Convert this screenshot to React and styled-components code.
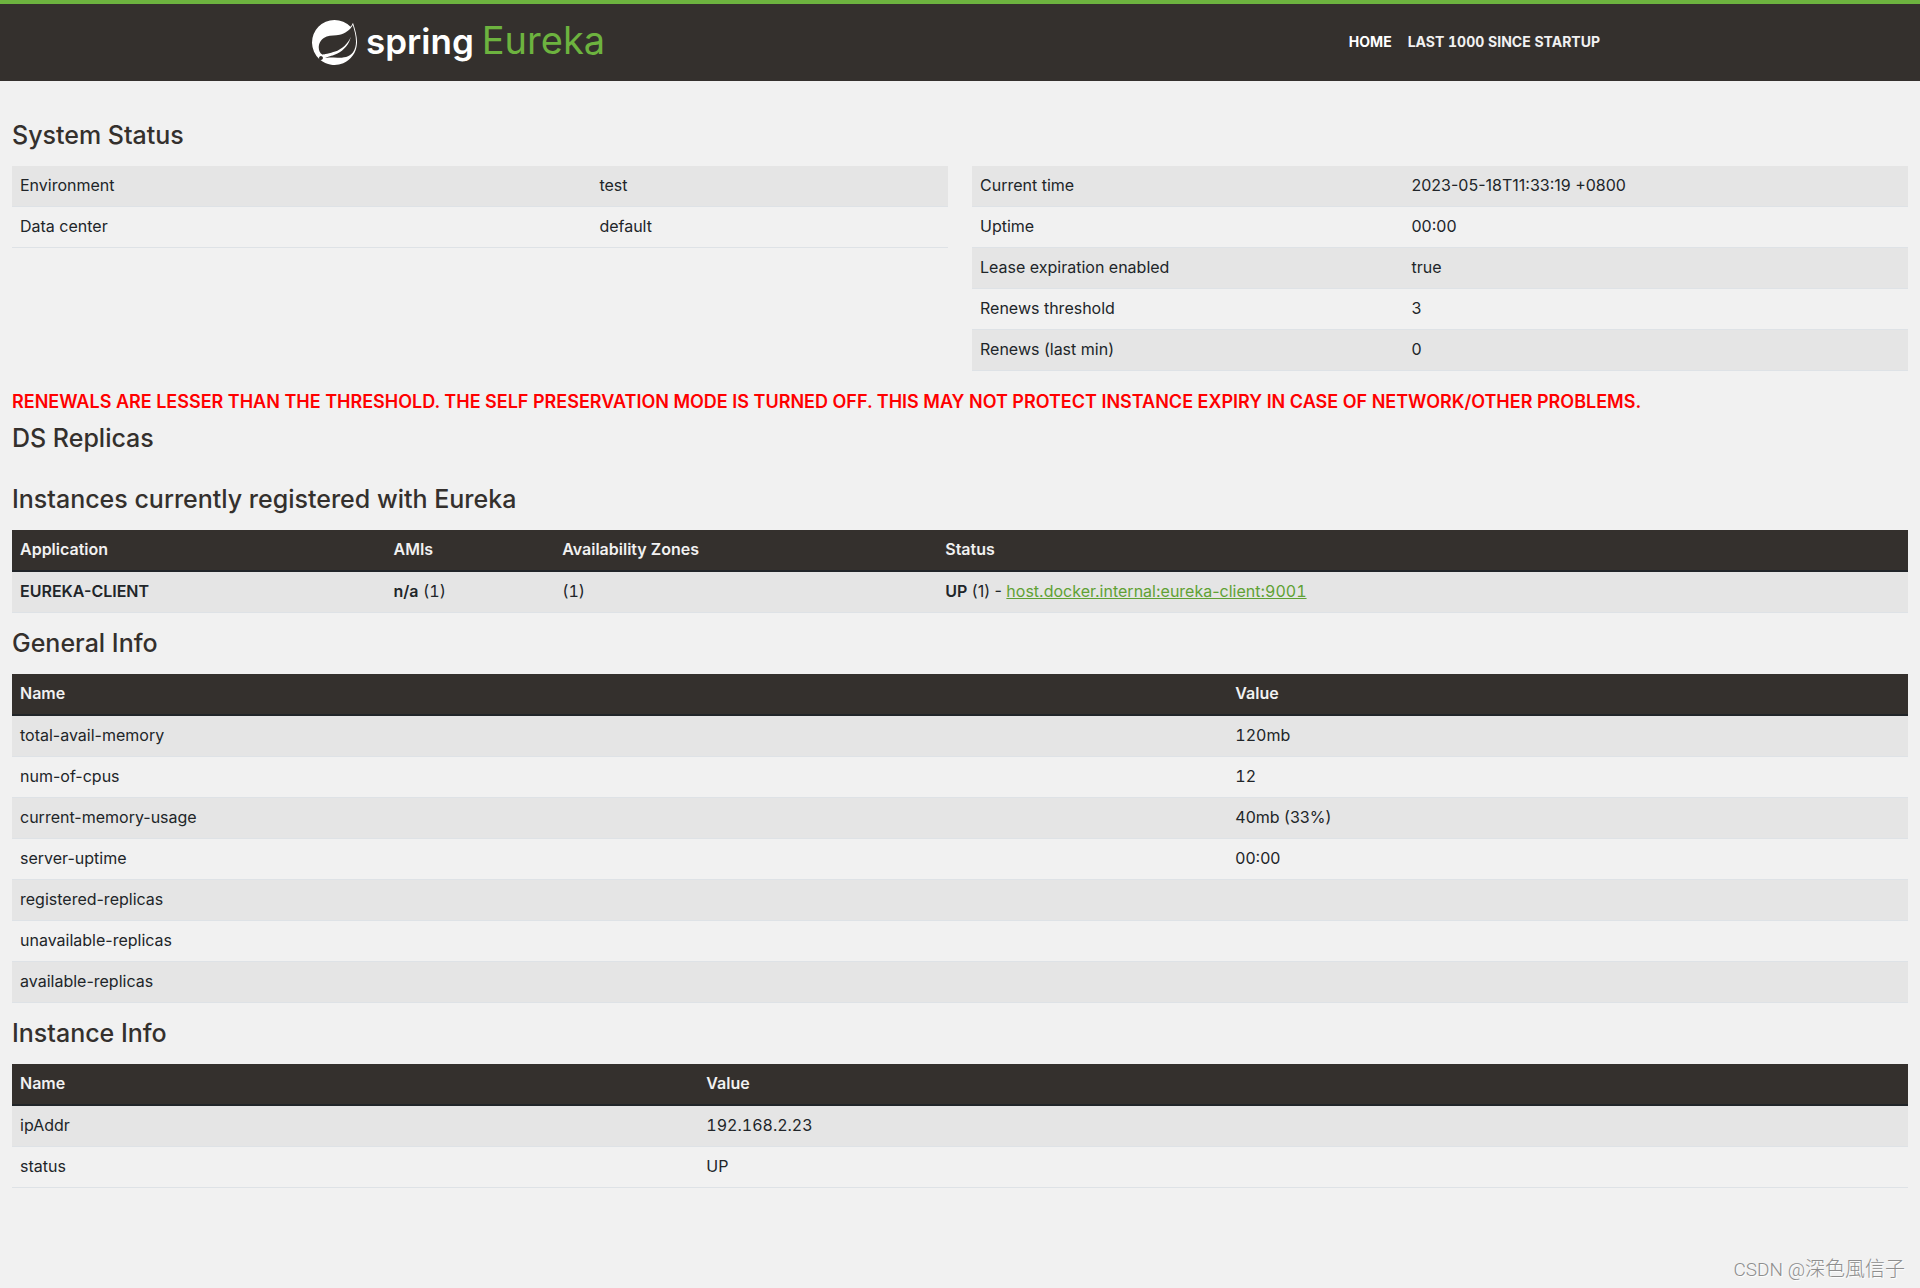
import React from "react";
import styled, { createGlobalStyle } from "styled-components";

const GlobalStyle = createGlobalStyle`
  * { box-sizing: border-box; }
  html { background: #f1f1f1; }
  body {
    margin: 0;
    background: #f1f1f1;
    color: #212529;
    font-family: Inter, "Liberation Sans", sans-serif;
    font-size: 16px;
    line-height: 24px;
  }
`;

const Page = styled.div`
  position: relative;
  min-height: 100vh;
`;

const NavBar = styled.header`
  background: #34302d;
  border-top: 4px solid #6db33f;
`;

const NavInner = styled.div`
  display: flex;
  align-items: center;
  justify-content: space-between;
  max-width: 1320px;
  height: 77px;
  margin: 0 auto;
  padding: 0 12px;
`;

const Brand = styled.a`
  display: flex;
  align-items: center;
  gap: 9px;
  text-decoration: none;
`;

const Leaf = styled.svg`
  width: 45px;
  height: 45px;
  fill: #fff;
`;

const Wordmark = styled.span`
  display: flex;
  align-items: baseline;
  gap: 8px;
  padding-bottom: 4px;
  color: #fff;
  font-size: 35px;
  line-height: 40px;
  font-weight: 600;
`;

const Product = styled.span`
  color: #6db33f;
  font-size: 38px;
  font-weight: 400;
`;

const NavLinks = styled.nav`
  display: flex;
  font-variant-numeric: tabular-nums;
`;

const NavLink = styled.a`
  padding: 7px 8px 9px;
  color: ${(p) => (p.$active ? "#fff" : "#f1f1f1")};
  font-size: 14px;
  line-height: 20px;
  font-weight: 700;
  text-decoration: none;
  text-transform: uppercase;
`;

const Content = styled.main`
  padding: 40px 12px 0;
`;

const Heading = styled.h1`
  margin: 0 0 16px;
  color: #34302d;
  font-size: 25px;
  line-height: 29px;
  font-weight: 500;
`;

const EmptyHeading = styled(Heading)`
  margin-bottom: 32px;
`;

const Warning = styled.h4`
  margin: 0 0 8px;
  color: #f00;
  font-size: 18px;
  line-height: 29px;
  font-weight: 600;
`;

const Columns = styled.div`
  display: grid;
  grid-template-columns: 1fr 1fr;
  gap: 24px;
  align-items: start;
`;

const Table = styled.table`
  width: 100%;
  margin-bottom: 16px;
  border-collapse: separate;
  border-spacing: 0;
  table-layout: fixed;
`;

const Col = styled.col`
  width: ${(p) => p.$width || "auto"};
`;

const HeadCell = styled.th`
  padding: 7px 8px 9px;
  border-bottom: 2px solid #212529;
  background: #34302d;
  color: #f1f1f1;
  font-weight: 600;
  text-align: left;
`;

const Row = styled.tr`
  height: 41px;
  &:nth-child(odd) { background: #e5e5e5; }
`;

const Cell = styled.td`
  padding: 7px 8px 9px;
  border-bottom: 1px solid #dee2e6;
`;

const Strong = styled.b`
  font-weight: 600;
`;

const Figures = styled.span`
  font-variant-numeric: tabular-nums;
`;

const InstanceLink = styled.a`
  color: #5fa134;
  text-decoration: underline;
`;

const Watermark = styled.div`
  position: absolute;
  right: 15px;
  bottom: 6px;
  color: #8e8e8e;
  font-family: Roboto, "Noto Sans CJK TC", sans-serif;
  font-size: 20px;
  line-height: 24px;
  font-weight: 300;
  text-shadow: 1px 1px 1px #fff;
`;

const WatermarkSite = styled.span`
  font-size: 19px;
`;

function DataTable({ label, widths, head, rows }) {
  return (
    <Table aria-label={label}>
      <colgroup>
        {widths.map((w, i) => <Col key={i} $width={w} />)}
      </colgroup>
      {head && (
        <thead>
          <tr>{head.map((h) => <HeadCell key={h} scope="col">{h}</HeadCell>)}</tr>
        </thead>
      )}
      <tbody>
        {rows.map((row, r) => (
          <Row key={r}>{row.map((c, i) => <Cell key={i}>{c}</Cell>)}</Row>
        ))}
      </tbody>
    </Table>
  );
}

const environment = [["Environment", "test"], ["Data center", "default"]];

const renewals = [
  ["Current time", "2023-05-18T11:33:19 +0800"],
  ["Uptime", "00:00"],
  ["Lease expiration enabled", "true"],
  ["Renews threshold", "3"],
  ["Renews (last min)", "0"],
];

const instances = [[
  <Strong>EUREKA-CLIENT</Strong>,
  <><Strong>n/a</Strong> <Figures>(1)</Figures></>,
  <Figures>(1)</Figures>,
  <><Strong>UP</Strong> (1) - <InstanceLink href="#instance">host.docker.internal:eureka-client:<Figures>9001</Figures></InstanceLink></>,
]];

const generalInfo = [
  ["total-avail-memory", <Figures>120mb</Figures>],
  ["num-of-cpus", <Figures>12</Figures>],
  ["current-memory-usage", "40mb (33%)"],
  ["server-uptime", "00:00"],
  ["registered-replicas", ""],
  ["unavailable-replicas", ""],
  ["available-replicas", ""],
];

const instanceInfo = [["ipAddr", <Figures>192.168.2.23</Figures>], ["status", "UP"]];

export default function App() {
  return (
    <Page>
      <GlobalStyle />
      <NavBar>
        <NavInner>
          <Brand href="#home">
            <Leaf viewBox="0 0 24 24" aria-hidden="true">
              <path d="M21.8537 1.4158a10.4504 10.4504 0 0 1-1.284 2.2471A11.9666 11.9666 0 1 0 3.8518 20.7757l.4445.3951a11.9543 11.9543 0 0 0 19.6316-8.2971c.3457-3.0126-.568-6.8649-2.0742-11.458zM5.5805 20.8745a1.0174 1.0174 0 1 1-.1482-1.4323 1.0396 1.0396 0 0 1 .1482 1.4323zm16.1991-3.5806c-2.9385 3.9263-9.2601 2.5928-13.2852 2.7904 0 0-.7161.0494-1.4323.1481 0 0 .2717-.1234.6174-.2469 2.8398-.9877 4.1732-1.1853 5.9018-2.0743 3.2349-1.6545 6.4698-5.2844 7.1118-9.0379-1.2347 3.6053-4.9881 6.7166-8.3959 7.9761-2.3459.8643-6.5685 1.7039-6.5685 1.7039l-.1729-.0988c-2.8645-1.4076-2.9632-7.6304 2.2718-9.6306 2.2966-.889 4.4696-.395 6.9637-.9877 2.6422-.6174 5.7043-2.5929 6.939-5.1857 1.3828 4.1732 3.062 10.643.0493 14.6434z" />
            </Leaf>
            <Wordmark>
              <span>spring</span>
              <Product>Eureka</Product>
            </Wordmark>
          </Brand>
          <NavLinks>
            <NavLink href="#home" $active>Home</NavLink>
            <NavLink href="#lastn">Last 1000 since startup</NavLink>
          </NavLinks>
        </NavInner>
      </NavBar>
      <Content>
        <Heading>System Status</Heading>
        <Columns>
          <DataTable label="Environment" widths={["61.9%"]} rows={environment} />
          <DataTable label="Renewals" widths={["46.1%"]} rows={renewals} />
        </Columns>
        <Warning>RENEWALS ARE LESSER THAN THE THRESHOLD. THE SELF PRESERVATION MODE IS TURNED OFF. THIS MAY NOT PROTECT INSTANCE EXPIRY IN CASE OF NETWORK/OTHER PROBLEMS.</Warning>
        <EmptyHeading>DS Replicas</EmptyHeading>
        <Heading>Instances currently registered with Eureka</Heading>
        <DataTable
          label="Instances"
          widths={["19.7%", "8.9%", "20.2%"]}
          head={["Application", "AMIs", "Availability Zones", "Status"]}
          rows={instances}
        />
        <Heading>General Info</Heading>
        <DataTable label="General Info" widths={["64.1%"]} head={["Name", "Value"]} rows={generalInfo} />
        <Heading>Instance Info</Heading>
        <DataTable label="Instance Info" widths={["36.2%"]} head={["Name", "Value"]} rows={instanceInfo} />
      </Content>
      <Watermark><WatermarkSite>CSDN @</WatermarkSite>深色風信子</Watermark>
    </Page>
  );
}
